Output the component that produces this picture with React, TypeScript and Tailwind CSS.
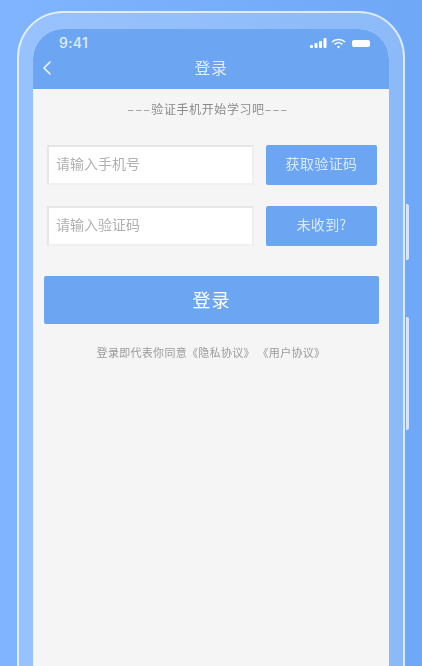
import { ChevronLeft } from "lucide-react";

const cjk = "font-['Noto_Sans_CJK_SC','Noto_Sans',sans-serif]";

const StatusIcons = () => (
  <div className="flex items-center gap-[4px]">
    <svg width="17" height="11" viewBox="0 0 17 11" fill="white">
      <rect x="0" y="7" width="3" height="3" rx="1" />
      <rect x="4.5" y="5" width="3" height="5" rx="1" />
      <rect x="9" y="3" width="3" height="7" rx="1" />
      <rect x="13.5" y="0" width="3" height="10" rx="1" />
    </svg>
    <svg width="15" height="11" viewBox="0 0 15 11" fill="none" stroke="white" strokeWidth="1.6">
      <path d="M1 4 C4.5 0.6 10.5 0.6 14 4" />
      <path d="M3.5 6.3 C5.8 4.2 9.2 4.2 11.5 6.3" />
      <circle cx="7.5" cy="9" r="1.2" fill="white" stroke="none" />
    </svg>
    <div className="ml-[2px] h-[7px] w-[18px] rounded-[2px] bg-white" />
  </div>
);

const Field = ({ placeholder, action }: { placeholder: string; action: string }) => (
  <div className="flex items-stretch justify-between h-[40px]">
    <div className="w-[207px] bg-white border-2 border-[#e6e6e6] border-b-[#f0f0f0] border-r-[#efefef] flex items-center pl-[7px] pb-[4px] text-[14px] text-[#b0b0b0]">
      {placeholder}
    </div>
    <button className="w-[111px] pb-[3px] rounded-[2px] bg-[#6ca6f3] text-[14px] text-white/75 tracking-[0.4px]">
      {action}
    </button>
  </div>
);

export default function App() {
  return (
    <div className={`relative w-[422px] h-[666px] overflow-hidden bg-gradient-to-r from-[#80b4fe] to-[#6fa8f6] pt-[11px] pl-[17px] ${cjk}`}>
      <div className="absolute left-[406px] top-[204px] h-[56px] w-[3px] rounded-r-[2px] bg-white/70" />
      <div className="absolute left-[406px] top-[317px] h-[113px] w-[3px] rounded-r-[2px] bg-white/70" />

      <div className="w-[388px] h-[720px] rounded-t-[46px] border-2 border-white/70 bg-white/20 pt-[16px] px-[14px] blur-[0.4px]">
        <div className="h-full rounded-t-[30px] overflow-hidden bg-[#f5f5f5]">
          <div className="h-[60px] bg-[#6ca6f3] text-white pt-[6px]">
            <div className="flex items-center justify-between h-[16px] pl-[26px] pr-[19px]">
              <span className="text-[14px] leading-none font-['Inter',sans-serif] font-medium text-white/80 tracking-[0.4px]">9:41</span>
              <StatusIcons />
            </div>
            <div className="relative flex items-center justify-center mt-[1px] h-[30px]">
              <ChevronLeft size={24} strokeWidth={1.6} className="absolute left-[2px] top-[4px] text-white/90" />
              <span className="text-[16px] text-white/80 tracking-[0.5px]">登录</span>
            </div>
          </div>

          <div className="pt-[12px] pr-[6px] text-center text-[12px] leading-[16px] text-[#8a8a8a] tracking-[0.6px]">
            <span className="tracking-[1.5px]">–––</span>验证手机开始学习吧<span className="tracking-[1.5px]">–––</span>
          </div>

          <div className="mt-[28px] ml-[14px] mr-[12px] flex flex-col gap-[21px]">
            <Field placeholder="请输入手机号" action="获取验证码" />
            <Field placeholder="请输入验证码" action="未收到?" />
          </div>

          <button className="block mt-[30px] ml-[11px] w-[335px] h-[48px] pb-[2px] rounded-[2px] bg-[#6ca6f3] text-[18px] text-white tracking-[1px]">
            登录
          </button>

          <p className="mt-[20px] text-center text-[11px] leading-[16px] text-[#9a9a9a] tracking-[0.3px]">
            登录即代表你同意《隐私协议》 《用户协议》
          </p>
        </div>
      </div>
    </div>
  );
}
